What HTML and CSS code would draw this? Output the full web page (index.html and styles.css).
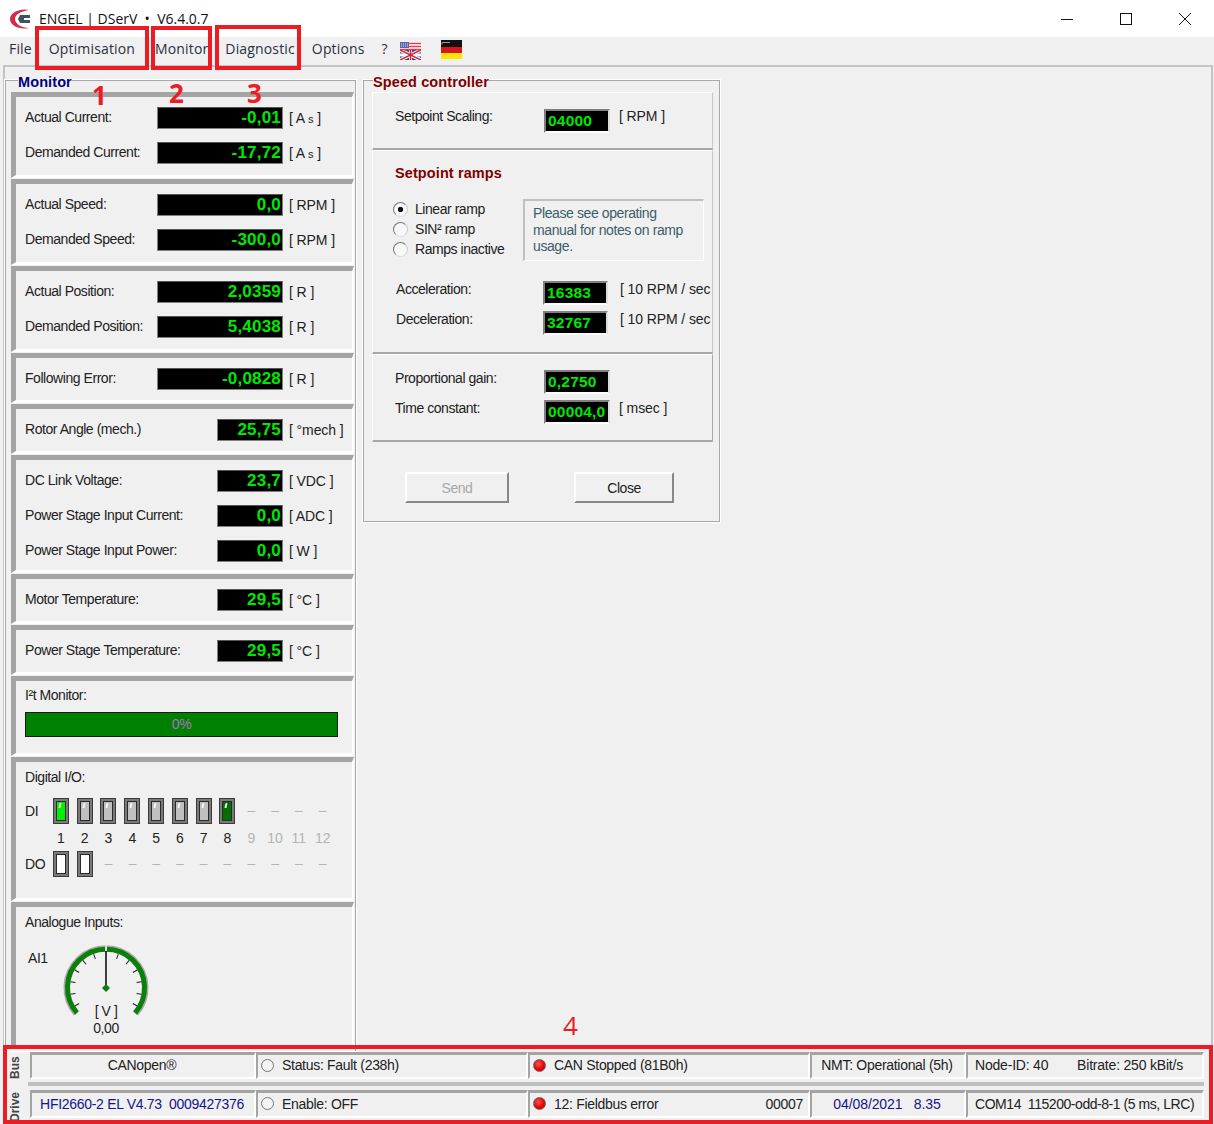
FILE: index.html
```html
<!DOCTYPE html>
<html lang="en">
<head>
    <meta charset="UTF-8">
    <title>ENGEL | DSerV V6.4.0.7</title>
    <link rel="stylesheet" href="styles.css">
</head>
<body>
    <header class="title-bar">
        <svg class="logo" width="22" height="22" viewBox="0 0 22 22">
            <path d="M20 2 C12 0 1 4 1 11 C1 18 11 22 20 20 C13 20 6 16 6 11 C6 6 13 3 20 2z" fill="#d42c48"/>
            <path d="M11 7h10v3h-6v2h6v3H11l-2-4z" fill="#3a5560"/>
        </svg>
        <span class="app-name">ENGEL | DSerV &nbsp;•&nbsp; V6.4.0.7</span>
        <div class="win-buttons">
            <svg width="14" height="14" viewBox="0 0 14 14"><path d="M1 7.5h12" stroke="#111" fill="none"/></svg>
            <svg width="14" height="14" viewBox="0 0 14 14"><rect x="1.5" y="1.5" width="11" height="11" stroke="#111" fill="none"/></svg>
            <svg width="14" height="14" viewBox="0 0 14 14"><path d="M1 1l12 12M13 1L1 13" stroke="#111" fill="none"/></svg>
        </div>
    </header>

    <nav class="menu-bar">
        <a>File</a>
        <a>Optimisation</a>
        <a class="m-monitor">Monitor</a>
        <a>Diagnostic</a>
        <a>Options</a>
        <a>?</a>
        <svg class="flag-uk" width="21" height="18" viewBox="0 0 21 18">
            <rect width="21" height="18" fill="#fff"/>
            <rect y="8" width="21" height="10" fill="#34408c"/>
            <path d="M0 8l21 10M21 8L0 18" stroke="#fff" stroke-width="3.5"/>
            <path d="M10.5 8v10M0 13h21" stroke="#fff" stroke-width="3"/>
            <path d="M10.5 8v10M0 8l21 10M21 8L0 18" stroke="#d42030" stroke-width="1.5"/>
            <path d="M9 1.5h12M9 4.5h12M0 7.5h21" stroke="#d84050" stroke-width="1.5"/>
            <rect width="9" height="6" fill="#5a66a8"/>
            <path d="M1 2h7M1 4h7" stroke="#d8dcf0" stroke-dasharray="1 1"/>
        </svg>
        <svg class="flag-de" width="21" height="19" viewBox="0 0 21 19">
            <rect width="21" height="7" fill="#111"/>
            <rect y="7" width="21" height="6" fill="#d8141c"/>
            <rect y="13" width="21" height="6" fill="#ffe600"/>
            <path d="M1 2.5h8M1 2.5v2" stroke="#999"/>
        </svg>
    </nav>

    <main class="workspace">
        <fieldset class="monitor">
            <legend>Monitor</legend>

            <section class="sec two">
                <div class="row"><label>Actual Current:</label><output class="lcd">-0,01</output><span class="unit">[ A <small>s</small> ]</span></div>
                <div class="row"><label>Demanded Current:</label><output class="lcd">-17,72</output><span class="unit">[ A <small>s</small> ]</span></div>
            </section>
            <section class="sec two">
                <div class="row"><label>Actual Speed:</label><output class="lcd">0,0</output><span class="unit">[ RPM ]</span></div>
                <div class="row"><label>Demanded Speed:</label><output class="lcd">-300,0</output><span class="unit">[ RPM ]</span></div>
            </section>
            <section class="sec two">
                <div class="row"><label>Actual Position:</label><output class="lcd">2,0359</output><span class="unit">[ R ]</span></div>
                <div class="row"><label>Demanded Position:</label><output class="lcd">5,4038</output><span class="unit">[ R ]</span></div>
            </section>
            <section class="sec one">
                <div class="row"><label>Following Error:</label><output class="lcd">-0,0828</output><span class="unit">[ R ]</span></div>
            </section>
            <section class="sec one">
                <div class="row"><label class="wide">Rotor Angle (mech.)</label><output class="lcd short">25,75</output><span class="unit">[ °mech ]</span></div>
            </section>
            <section class="sec three">
                <div class="row"><label class="wide">DC Link Voltage:</label><output class="lcd short">23,7</output><span class="unit">[ VDC ]</span></div>
                <div class="row"><label class="wide">Power Stage Input Current:</label><output class="lcd short">0,0</output><span class="unit">[ ADC ]</span></div>
                <div class="row"><label class="wide">Power Stage Input Power:</label><output class="lcd short">0,0</output><span class="unit">[ W ]</span></div>
            </section>
            <section class="sec one">
                <div class="row"><label class="wide">Motor Temperature:</label><output class="lcd short">29,5</output><span class="unit">[ °C ]</span></div>
            </section>
            <section class="sec one">
                <div class="row"><label class="wide">Power Stage Temperature:</label><output class="lcd short">29,5</output><span class="unit">[ °C ]</span></div>
            </section>

            <section class="sec i2t">
                <div class="sec-title">I²t Monitor:</div>
                <div class="progress">0%</div>
            </section>

            <section class="sec dio">
                <div class="sec-title">Digital I/O:</div>
                <div class="io-grid">
                    <span class="io-label">DI</span>
                    <i class="led on"></i><i class="led"></i><i class="led"></i><i class="led"></i><i class="led"></i><i class="led"></i><i class="led"></i><i class="led dark"></i>
                    <b class="dash">–</b><b class="dash">–</b><b class="dash">–</b><b class="dash">–</b>

                    <span></span>
                    <b>1</b><b>2</b><b>3</b><b>4</b><b>5</b><b>6</b><b>7</b><b>8</b>
                    <b class="off">9</b><b class="off">10</b><b class="off">11</b><b class="off">12</b>

                    <span class="io-label">DO</span>
                    <i class="led out"></i><i class="led out"></i>
                    <b class="dash">–</b><b class="dash">–</b><b class="dash">–</b><b class="dash">–</b><b class="dash">–</b>
                    <b class="dash">–</b><b class="dash">–</b><b class="dash">–</b><b class="dash">–</b><b class="dash">–</b>
                </div>
            </section>

            <section class="sec analogue">
                <div class="sec-title">Analogue Inputs:</div>
                <div class="gauge-row">
                    <span class="ai-label">AI1</span>
                    <div class="gauge">
                        <svg width="88" height="76" viewBox="0 0 88 76">
                            <path d="M13 70.5 A41 41 0 1 1 75 70.5" fill="none" stroke="#a8a8a8" stroke-width="3"/>
                            <path d="M15 69 A38.5 38.5 0 1 1 73 69" fill="none" stroke="#0a800a" stroke-width="5"/>
                            <g stroke="#222">
                                <path d="M44 8v5" transform="rotate(-120 44 44)"/>
                                <path d="M44 8v5" transform="rotate(-100 44 44)"/>
                                <path d="M44 8v5" transform="rotate(-80 44 44)"/>
                                <path d="M44 8v5" transform="rotate(-60 44 44)"/>
                                <path d="M44 8v5" transform="rotate(-40 44 44)"/>
                                <path d="M44 8v5" transform="rotate(-20 44 44)"/>
                                <path d="M44 8v5" transform="rotate(20 44 44)"/>
                                <path d="M44 8v5" transform="rotate(40 44 44)"/>
                                <path d="M44 8v5" transform="rotate(60 44 44)"/>
                                <path d="M44 8v5" transform="rotate(80 44 44)"/>
                                <path d="M44 8v5" transform="rotate(100 44 44)"/>
                                <path d="M44 8v5" transform="rotate(120 44 44)"/>
                            </g>
                            <path d="M44 1v6" stroke="#ddd" stroke-width="2"/>
                            <path d="M44 7v37" stroke="#111" stroke-width="1.6"/>
                            <path d="M44 40l4 4-4 4-4-4z" fill="#0a800a"/>
                        </svg>
                        <div class="gauge-unit">[ V ]</div>
                        <div class="gauge-val">0,00</div>
                    </div>
                </div>
            </section>
        </fieldset>

        <fieldset class="speed">
            <legend>Speed controller</legend>

            <section class="flat scaling">
                <div class="s-row">
                    <label>Setpoint Scaling:</label>
                    <output class="input">04000</output>
                    <span class="s-unit">[ RPM ]</span>
                </div>
            </section>

            <section class="flat ramps">
                <h3>Setpoint ramps</h3>
                <div class="ramp-opts">
                    <div class="radios">
                        <div class="radio checked">Linear ramp</div>
                        <div class="radio">SIN² ramp</div>
                        <div class="radio">Ramps inactive</div>
                    </div>
                    <p class="note">Please see operating manual for notes on ramp usage.</p>
                </div>
                <div class="s-row accel first">
                    <label>Acceleration:</label>
                    <output class="input">16383</output>
                    <span class="s-unit">[ 10 RPM / sec</span>
                </div>
                <div class="s-row accel">
                    <label>Deceleration:</label>
                    <output class="input">32767</output>
                    <span class="s-unit">[ 10 RPM / sec</span>
                </div>
            </section>

            <section class="flat gains">
                <div class="s-row">
                    <label>Proportional gain:</label>
                    <output class="input">0,2750</output>
                </div>
                <div class="s-row">
                    <label>Time constant:</label>
                    <output class="input">00004,0</output>
                    <span class="s-unit">[ msec ]</span>
                </div>
            </section>

            <div class="buttons">
                <button class="btn-send" disabled>Send</button>
                <button class="btn-close">Close</button>
            </div>
        </fieldset>
    </main>

    <footer class="status">
        <div class="status-row bus">
            <span class="side">Bus</span>
            <div class="cell center">CANopen®</div>
            <div class="cell"><i class="dot"></i>Status: Fault (238h)</div>
            <div class="cell"><i class="dot red"></i>CAN Stopped (81B0h)</div>
            <div class="cell center">NMT: Operational (5h)</div>
            <div class="cell split last"><span>Node-ID: 40</span><span>Bitrate: 250 kBit/s</span></div>
        </div>
        <div class="status-row drive">
            <span class="side">Drive</span>
            <div class="cell center blue">HFI2660-2 EL V4.73 &nbsp;0009427376</div>
            <div class="cell"><i class="dot"></i>Enable: OFF</div>
            <div class="cell split"><span><i class="dot red"></i>12: Fieldbus error</span><span>00007</span></div>
            <div class="cell center blue date">04/08/2021 &nbsp; 8.35</div>
            <div class="cell last">COM14 &nbsp;115200-odd-8-1 (5 ms, LRC)</div>
        </div>
    </footer>

    <!-- red marks drawn on top of the screenshot -->
    <div class="mark mark-opt"></div>
    <div class="mark mark-mon"></div>
    <div class="mark mark-diag"></div>
    <div class="mark mark-status"></div>
    <span class="num num-1">1</span>
    <span class="num num-2">2</span>
    <span class="num num-3">3</span>
    <span class="num num-4">4</span>
</body>
</html>
```

FILE: styles.css
```css
/* Global */
* {
    box-sizing: border-box;
}

html, body {
    margin: 0;
    height: 100%;
}

body {
    width: 1214px;
    height: 1124px;
    overflow: hidden;
    background-color: #f0f0f0;
    color: #222;
    font-family: "Liberation Sans", Arial, sans-serif;
    font-size: 14px;
    letter-spacing: -0.45px;
    display: flex;
    flex-direction: column;
    position: relative;
}

/* Title bar */
.title-bar {
    height: 37px;
    background-color: #fff;
    display: flex;
    align-items: center;
    padding-left: 9px;
    flex: none;
}

.app-name {
    margin-left: 8px;
    font-family: "Open Sans", sans-serif;
    font-size: 14px;
    letter-spacing: 0;
    color: #111;
}

.win-buttons {
    margin-left: auto;
    display: flex;
    gap: 45px;
    padding-right: 22px;
}

/* Menu bar */
.menu-bar {
    height: 27px;
    display: flex;
    align-items: center;
    padding: 0 0 5px 9px;
    gap: 17px;
    flex: none;
    font-family: "Open Sans", sans-serif;
    font-size: 14px;
    letter-spacing: 0.15px;
    color: #2a3040;
}

.m-monitor {
    margin-left: 3px;
}

.flag-uk {
    margin: 6px 0 0 -5px;
}

.flag-de {
    margin: 3px 0 0 3px;
}

/* Work area */
.workspace {
    flex: 1;
    min-height: 0;
    margin: 1px 1px 0 3px;
    border: 2px solid #c4c4c4;
    border-bottom: 0;
    display: flex;
    align-items: flex-start;
    gap: 7px;
}

fieldset {
    margin: 0;
    min-width: 0;
    border: 1px solid #a8a8a8;
    box-shadow: 0 0 0 1px #fff;
}

legend {
    padding: 4px 0 0;
    font-weight: bold;
    font-size: 14.5px;
    line-height: 16px;
    letter-spacing: 0.1px;
}

/* Left column */
.monitor {
    width: 351px;
    height: 981px;
    margin-top: 3px;
    padding: 2px 1px 0 5px;
    border-bottom: 0;
}

.monitor legend {
    margin-left: 7px;
    color: #000080;
}

.sec {
    width: 343px;
    margin-bottom: 1px;
    border-style: solid;
    border-width: 5px 2px 3px 5px;
    border-color: #a4a4a4 #fff #fff #a4a4a4;
    padding-left: 9px;
}

.sec.two {
    height: 86px;
    padding-top: 3px;
}

.sec.one {
    height: 50px;
    padding-top: 3px;
}

.sec.three {
    height: 118px;
    padding-top: 3px;
}

.row {
    height: 35px;
    display: flex;
    align-items: center;
}

.row label {
    width: 132px;
    flex: none;
    margin-top: -1px;
}

.row label.wide {
    width: 192px;
}

.lcd {
    width: 126px;
    height: 22px;
    flex: none;
    background-color: #000;
    border: 1px solid #808080;
    border-top-color: #555;
    color: #00e800;
    font-size: 17px;
    font-weight: bold;
    letter-spacing: 0.2px;
    line-height: 20px;
    text-align: right;
    padding-right: 1px;
}

.lcd.short {
    width: 66px;
}

.unit {
    margin-left: 6px;
    white-space: nowrap;
    letter-spacing: -0.1px;
}

.unit small {
    font-size: 11px;
}

.i2t {
    height: 80px;
    padding-top: 5px;
}

.sec-title {
    line-height: 18px;
}

.progress {
    width: 313px;
    height: 25px;
    margin-top: 8px;
    background-color: #008000;
    border: 1px solid #1a1a1a;
    color: #b070c0;
    font-size: 14px;
    line-height: 23px;
    text-align: center;
}

/* Digital I/O */
.dio {
    height: 144px;
    padding-top: 6px;
}

.io-grid {
    margin-top: 12px;
    display: grid;
    grid-template-columns: 24px repeat(12, 23.8px);
    grid-template-rows: 26px 27px 26px;
    justify-items: center;
    align-items: center;
}

.io-label {
    justify-self: start;
}

.io-grid b {
    font-weight: normal;
    font-size: 14px;
    letter-spacing: 0;
}

.io-grid b.off,
.io-grid b.dash {
    color: #b4b4b4;
}

.io-grid b.dash {
    padding-bottom: 3px;
}

.led {
    width: 16px;
    height: 26px;
    display: block;
    position: relative;
    background-color: #c0c0c0;
    border: 1px solid #3a3a3a;
    box-shadow: inset 0 0 0 2px #7a7a7a, inset 0 0 0 3px #2a2a2a;
}

.led::after {
    content: "";
    position: absolute;
    left: 5px;
    top: 4px;
    width: 2px;
    height: 5px;
    background-color: #f4f4f4;
    border-radius: 2px 2px 0 0;
    transform: skewX(-12deg);
}

.led.on {
    background-color: #00f000;
}

.led.dark {
    background-color: #007000;
}

.led.out {
    background-color: #fff;
}

.led.out::after {
    display: none;
}

/* Analogue */
.analogue {
    height: 146px;
    padding-top: 6px;
    border-bottom: 0;
}

.gauge-row {
    display: flex;
    margin-top: 3px;
}

.ai-label {
    width: 34px;
    margin: 16px 0 0 3px;
}

.gauge {
    width: 88px;
    margin: 10px 0 0 0;
    text-align: center;
}

.gauge svg {
    display: block;
}

.gauge-unit {
    margin-top: -18px;
    line-height: 18px;
}

.gauge-val {
    line-height: 17px;
}

/* Speed controller */
.speed {
    width: 357px;
    height: 452px;
    margin-top: 3px;
    padding: 2px 6px 0 8px;
}

.speed legend {
    margin-left: 1px;
    color: #800000;
}

.flat {
    width: 341px;
    border: 1px solid #fff;
    border-right-color: #c8c8c8;
    border-bottom: 2px solid #a8a8a8;
    padding-left: 22px;
}

.scaling {
    height: 58px;
    padding-top: 14px;
}

.ramps {
    height: 204px;
    padding-top: 13px;
}

.gains {
    height: 88px;
    padding-top: 13px;
    border-right-color: #a8a8a8;
}

.gains label,
.gains .s-unit {
    margin-top: 1px;
}

.flat h3 {
    margin: 0;
    color: #800000;
    font-size: 14.5px;
    letter-spacing: 0.1px;
    line-height: 18px;
}

.s-row {
    height: 30px;
    display: flex;
    align-items: flex-start;
}

.s-row label {
    width: 149px;
    flex: none;
    line-height: 18px;
}

.s-unit {
    margin-left: 9px;
    line-height: 18px;
    white-space: nowrap;
    letter-spacing: -0.1px;
}

.input {
    width: 66px;
    height: 24px;
    flex: none;
    margin-top: 2px;
    background-color: #000;
    border: 2px solid #808080;
    border-right-color: #ddd;
    border-bottom-color: #fff;
    color: #00e800;
    font-size: 15.5px;
    font-weight: bold;
    letter-spacing: 0.2px;
    line-height: 20px;
    padding-left: 2px;
}

.ramp-opts {
    display: flex;
    margin-top: 17px;
}

.radios {
    width: 130px;
    margin-left: -2px;
}

.radio {
    height: 20px;
    display: flex;
    align-items: center;
    gap: 7px;
}

.radio::before {
    content: "";
    width: 13px;
    height: 13px;
    border-radius: 50%;
    flex: none;
    background-color: #f8f8f8;
    border: 1px solid;
    border-color: #777 #ccc #ddd #777;
}

.radio.checked::before {
    background: radial-gradient(circle, #111 0 2.5px, #f8f8f8 3px);
}

.note {
    width: 181px;
    height: 62px;
    margin: 0;
    padding: 4px 8px 0 8px;
    border: 1px solid #fff;
    border-top: 2px solid #c0c0c0;
    border-left: 2px solid #c0c0c0;
    color: #3a6068;
    line-height: 16.5px;
    letter-spacing: -0.4px;
}

.accel.first {
    margin-top: 18px;
}

.accel label {
    width: 148px;
    padding: 1px 0 0 1px;
}

.accel .input {
    width: 65px;
}

.accel .s-unit {
    margin: 1px 0 0 12px;
}

.gains .s-row + .s-row {
    height: 27px;
}

.buttons {
    margin-top: 30px;
    padding-left: 33px;
    display: flex;
    gap: 65px;
}

button {
    height: 31px;
    background-color: #f0f0f0;
    border: 2px solid;
    border-color: #fff #888 #888 #fff;
    font-family: inherit;
    font-size: 14px;
    letter-spacing: inherit;
    color: #222;
}

button:disabled {
    color: #a8a8a8;
}

.btn-send {
    width: 104px;
}

.btn-close {
    width: 100px;
}

/* Status bars */
.status {
    height: 79px;
    flex: none;
    padding: 7px 10px 0 8px;
    letter-spacing: -0.3px;
}

.status-row {
    height: 27px;
    display: grid;
    grid-template-columns: 226px 272px 282px 156px 238px;
    position: relative;
    padding-left: 22px;
}

.status-row.bus {
    margin-bottom: 11px;
}

.status-row.drive {
    height: 28px;
}

.status-row.bus::after {
    content: "";
    position: absolute;
    left: 20px;
    right: 0;
    bottom: -7px;
    height: 4px;
    background-color: #c0c0c0;
}

.side {
    position: absolute;
    left: 0;
    top: 0;
    width: 14px;
    height: 31px;
    writing-mode: vertical-rl;
    transform: rotate(180deg);
    font-size: 12px;
    font-weight: bold;
    letter-spacing: 0;
    color: #444;
    text-align: center;
    line-height: 14px;
}

.drive .side {
    height: 34px;
}

.cell {
    display: flex;
    align-items: center;
    padding: 0 5px 2px 3px;
    border-style: solid;
    border-width: 3px 2px 2px 2px;
    border-color: #a4a4a4 #fff #fff #a4a4a4;
    white-space: nowrap;
    line-height: 16px;
}

.cell.center {
    justify-content: center;
}

.cell.split {
    justify-content: space-between;
}

.cell.split span {
    display: flex;
    align-items: center;
}

.cell.last {
    padding-left: 7px;
    letter-spacing: -0.45px;
}

.cell.split.last {
    padding-right: 19px;
}

.bus .cell.last {
    letter-spacing: -0.2px;
}

.blue {
    color: #14148c;
}

.date {
    letter-spacing: -0.1px;
}

.dot {
    width: 13px;
    height: 13px;
    flex: none;
    margin-right: 8px;
    border-radius: 50%;
    border: 1px solid #777;
    background-color: #f4f4f4;
}

.dot.red {
    background: radial-gradient(circle at 40% 35%, #ff5050, #e00000 60%);
    border-color: #666;
}

/* Red marks */
.mark {
    position: absolute;
    border: 4px solid #ed1c24;
}

.mark-opt {
    left: 35px;
    top: 26px;
    width: 114px;
    height: 44px;
}

.mark-mon {
    left: 151px;
    top: 26px;
    width: 61px;
    height: 44px;
}

.mark-diag {
    left: 215px;
    top: 25px;
    width: 86px;
    height: 45px;
}

.mark-status {
    left: 3px;
    top: 1045px;
    width: 1210px;
    height: 79px;
}

.num {
    position: absolute;
    color: #ed1c24;
    font-family: "Open Sans", sans-serif;
    font-size: 26px;
    font-weight: bold;
    line-height: 22px;
    letter-spacing: 0;
}

.num-1 {
    left: 92px;
    top: 84px;
}

.num-2 {
    left: 169px;
    top: 82px;
}

.num-3 {
    left: 247px;
    top: 82px;
}

.num-4 {
    left: 563px;
    top: 1014px;
    font-weight: normal;
}
```
